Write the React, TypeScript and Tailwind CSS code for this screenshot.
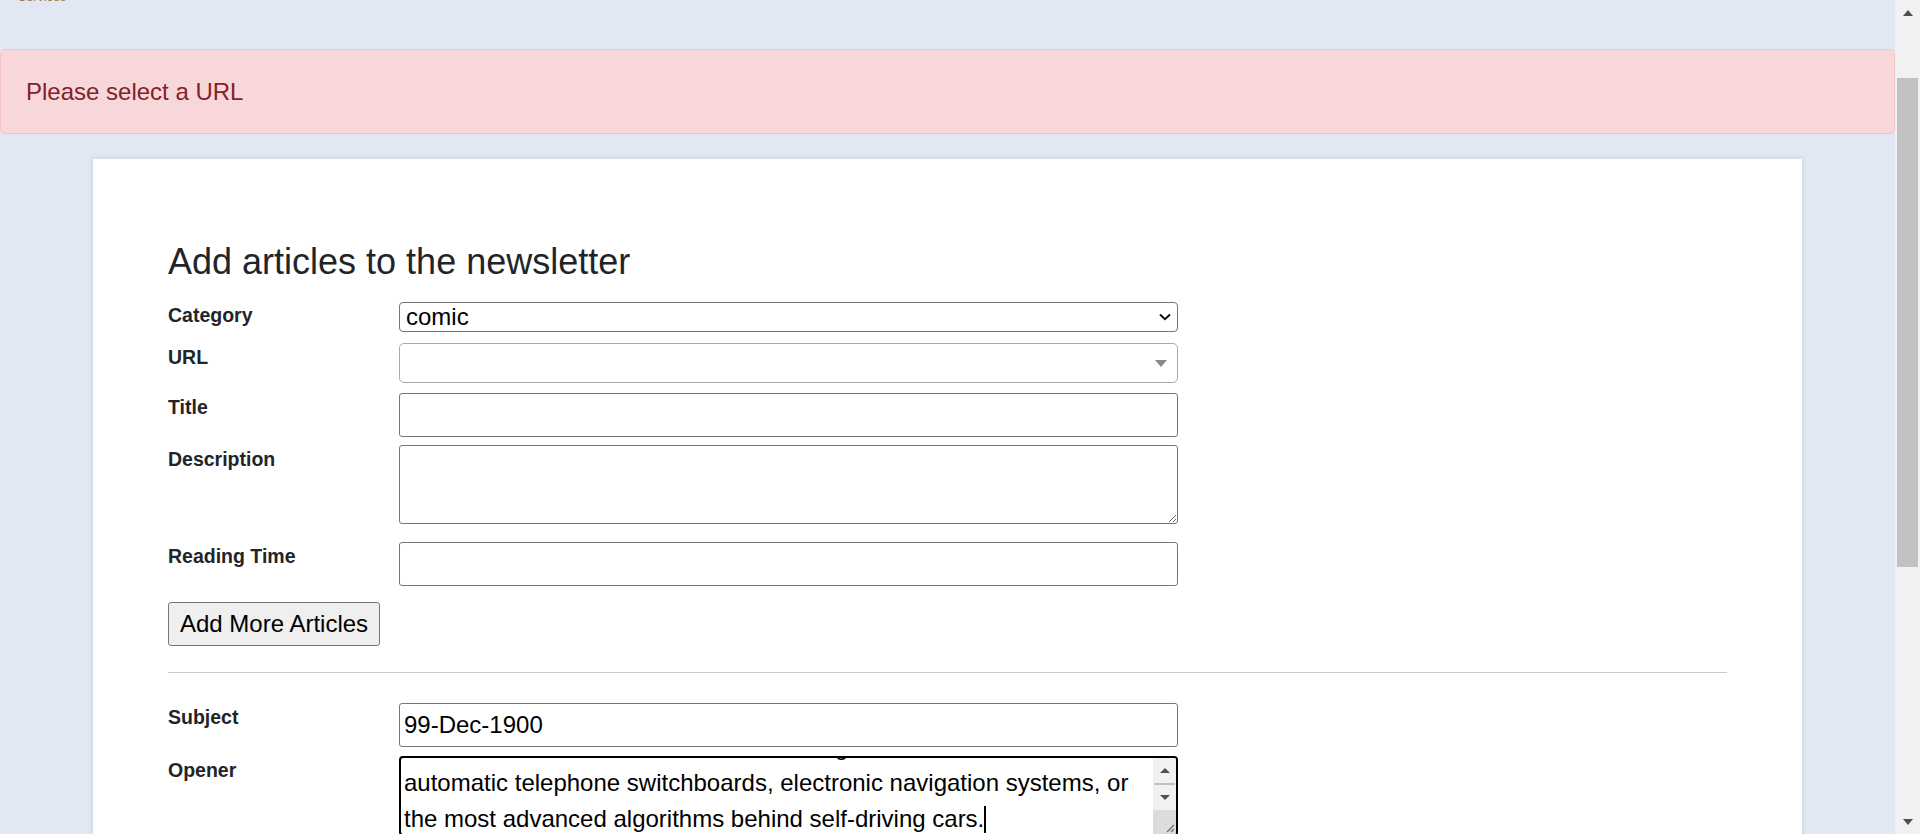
import React from "react";

const labelCls = "w-[231px] shrink-0 pt-[3px] text-[19.5px] leading-[22px] font-bold text-[#212529]";
const inputCls =
  "block w-[779px] h-[44px] bg-white border border-[#767676] rounded-[3px] px-[4px] text-[24px] text-black outline-none";

function Row({ label, className, labelClass, children }: {
  label: string
  className?: string
  labelClass?: string
  children: React.ReactNode
}) {
  return (
    <div className={"flex items-start " + (className ?? "")}>
      <label className={labelClass ?? labelCls}>{label}</label>
      {children}
    </div>
  );
}

function ResizeGrip() {
  return (
    <svg width="10" height="10" viewBox="0 0 10 10" className="block">
      <path d="M9 2 L2 9 M9 6 L6 9" stroke="#6b6b6b" strokeWidth="1.2" />
    </svg>
  );
}

function OpenerBox() {
  return (
    <div className="flex w-[779px] h-[80px] bg-white border-2 border-black rounded-[4px] overflow-hidden">
      <div className="flex-1 min-w-0 overflow-hidden pl-[3px] text-[24px] leading-[36px] text-black">
        <div className="-mt-[29px] whitespace-nowrap">
          <div>Electronic control was the secret behind gearboxes,</div>
          <div>automatic telephone switchboards, electronic navigation systems, or</div>
          <div>
            the most advanced algorithms behind self-driving cars.
            <span className="inline-block w-[2px] h-[27px] bg-black align-[-6px]" />
          </div>
        </div>
      </div>
      <div className="w-[23px] shrink-0 flex flex-col bg-[#f1f1f1]">
        <div className="h-[25px] flex items-center justify-center">
          <div className="w-0 h-0 border-l-[5.5px] border-r-[5.5px] border-b-[5px] border-l-transparent border-r-transparent border-b-[#505050]" />
        </div>
        <div className="h-[2px] mx-[1px] bg-[#c1c1c1]" />
        <div className="h-[25px] flex items-center justify-center">
          <div className="w-0 h-0 border-l-[5.5px] border-r-[5.5px] border-t-[5px] border-l-transparent border-r-transparent border-t-[#505050]" />
        </div>
        <div className="flex-1 bg-[#dcdcdc] flex items-end justify-end p-[1px]">
          <ResizeGrip />
        </div>
      </div>
    </div>
  );
}

function PageScrollbar() {
  return (
    <div className="w-[25px] shrink-0 h-full flex flex-col bg-[#f1f1f1]">
      <div className="h-[25px] flex items-center justify-center">
        <div className="w-0 h-0 border-l-[5.5px] border-r-[5.5px] border-b-[6px] border-l-transparent border-r-transparent border-b-[#505050]" />
      </div>
      <div className="h-[53px]" />
      <div className="h-[489px] mx-[2px] bg-[#c1c1c1]" />
      <div className="flex-1" />
      <div className="h-[25px] flex items-center justify-center">
        <div className="w-0 h-0 border-l-[5.5px] border-r-[5.5px] border-t-[6px] border-l-transparent border-r-transparent border-t-[#505050]" />
      </div>
    </div>
  );
}

export default function App() {
  return (
    <div className="flex w-full h-[834px] overflow-hidden bg-[#e1e8f4] font-['Liberation_Sans',Arial,sans-serif]">
      <div className="flex-1 min-w-0 flex flex-col">
        <div className="h-[5px] overflow-hidden pl-[18px] shrink-0">
          <span className="block -mt-[10px] text-[12.5px] leading-[14px] text-[#a07a52]">Services</span>
        </div>

        <div className="mt-[44px] h-[85px] shrink-0 flex items-center pl-[25px] bg-[#f8d7da] border border-[#f5c2c7] rounded-[5px] text-[24px] text-[#842029]">
          Please select a URL
        </div>

        <div className="mt-[25px] mx-[93px] shrink-0 bg-white shadow-[0_0_5px_rgba(60,80,130,0.18)] pt-[81px] px-[75px] pb-[60px]">
          <h3 className="text-[36px] leading-[43px] font-normal text-[#212529] mb-[19px]">
            Add articles to the newsletter
          </h3>

          <Row label="Category" labelClass={labelCls.replace("pt-[3px]", "pt-[1.5px]")}>
            <div className="w-[779px] h-[30px] flex items-center justify-between pl-[6px] pr-[6px] bg-white border border-[#767676] rounded-[4px]">
              <span className="text-[24px] leading-none text-black">comic</span>
              <svg width="12" height="8" viewBox="0 0 12 8" className="block">
                <path d="M1 1.5 L6 6.2 L11 1.5" fill="none" stroke="#111" strokeWidth="2" />
              </svg>
            </div>
          </Row>

          <Row label="URL" className="mt-[11px]">
            <div className="w-[779px] h-[40px] flex items-center justify-end pr-[10px] bg-white border border-[#aaa] rounded-[5px]">
              <div className="w-0 h-0 border-l-[6px] border-r-[6px] border-t-[7px] border-l-transparent border-r-transparent border-t-[#888]" />
            </div>
          </Row>

          <Row label="Title" className="mt-[10px]">
            <input className={inputCls} defaultValue="" />
          </Row>

          <Row label="Description" className="mt-[8px]">
            <textarea className="block w-[779px] h-[79px] bg-white border border-[#767676] rounded-[3px] px-[4px] text-[24px] outline-none" />
          </Row>

          <Row label="Reading Time" className="mt-[18px]">
            <input className={inputCls} defaultValue="" />
          </Row>

          <button className="mt-[16px] h-[44px] px-[11px] bg-[#efefef] border border-[#767676] rounded-[3px] text-[24px] leading-none text-black">
            Add More Articles
          </button>

          <div className="mt-[26px] h-px bg-[#cacaca]" />

          <Row label="Subject" className="mt-[30px]">
            <input className={inputCls} defaultValue="99-Dec-1900" />
          </Row>

          <Row label="Opener" className="mt-[9px]">
            <OpenerBox />
          </Row>
        </div>
      </div>
      <PageScrollbar />
    </div>
  );
}
